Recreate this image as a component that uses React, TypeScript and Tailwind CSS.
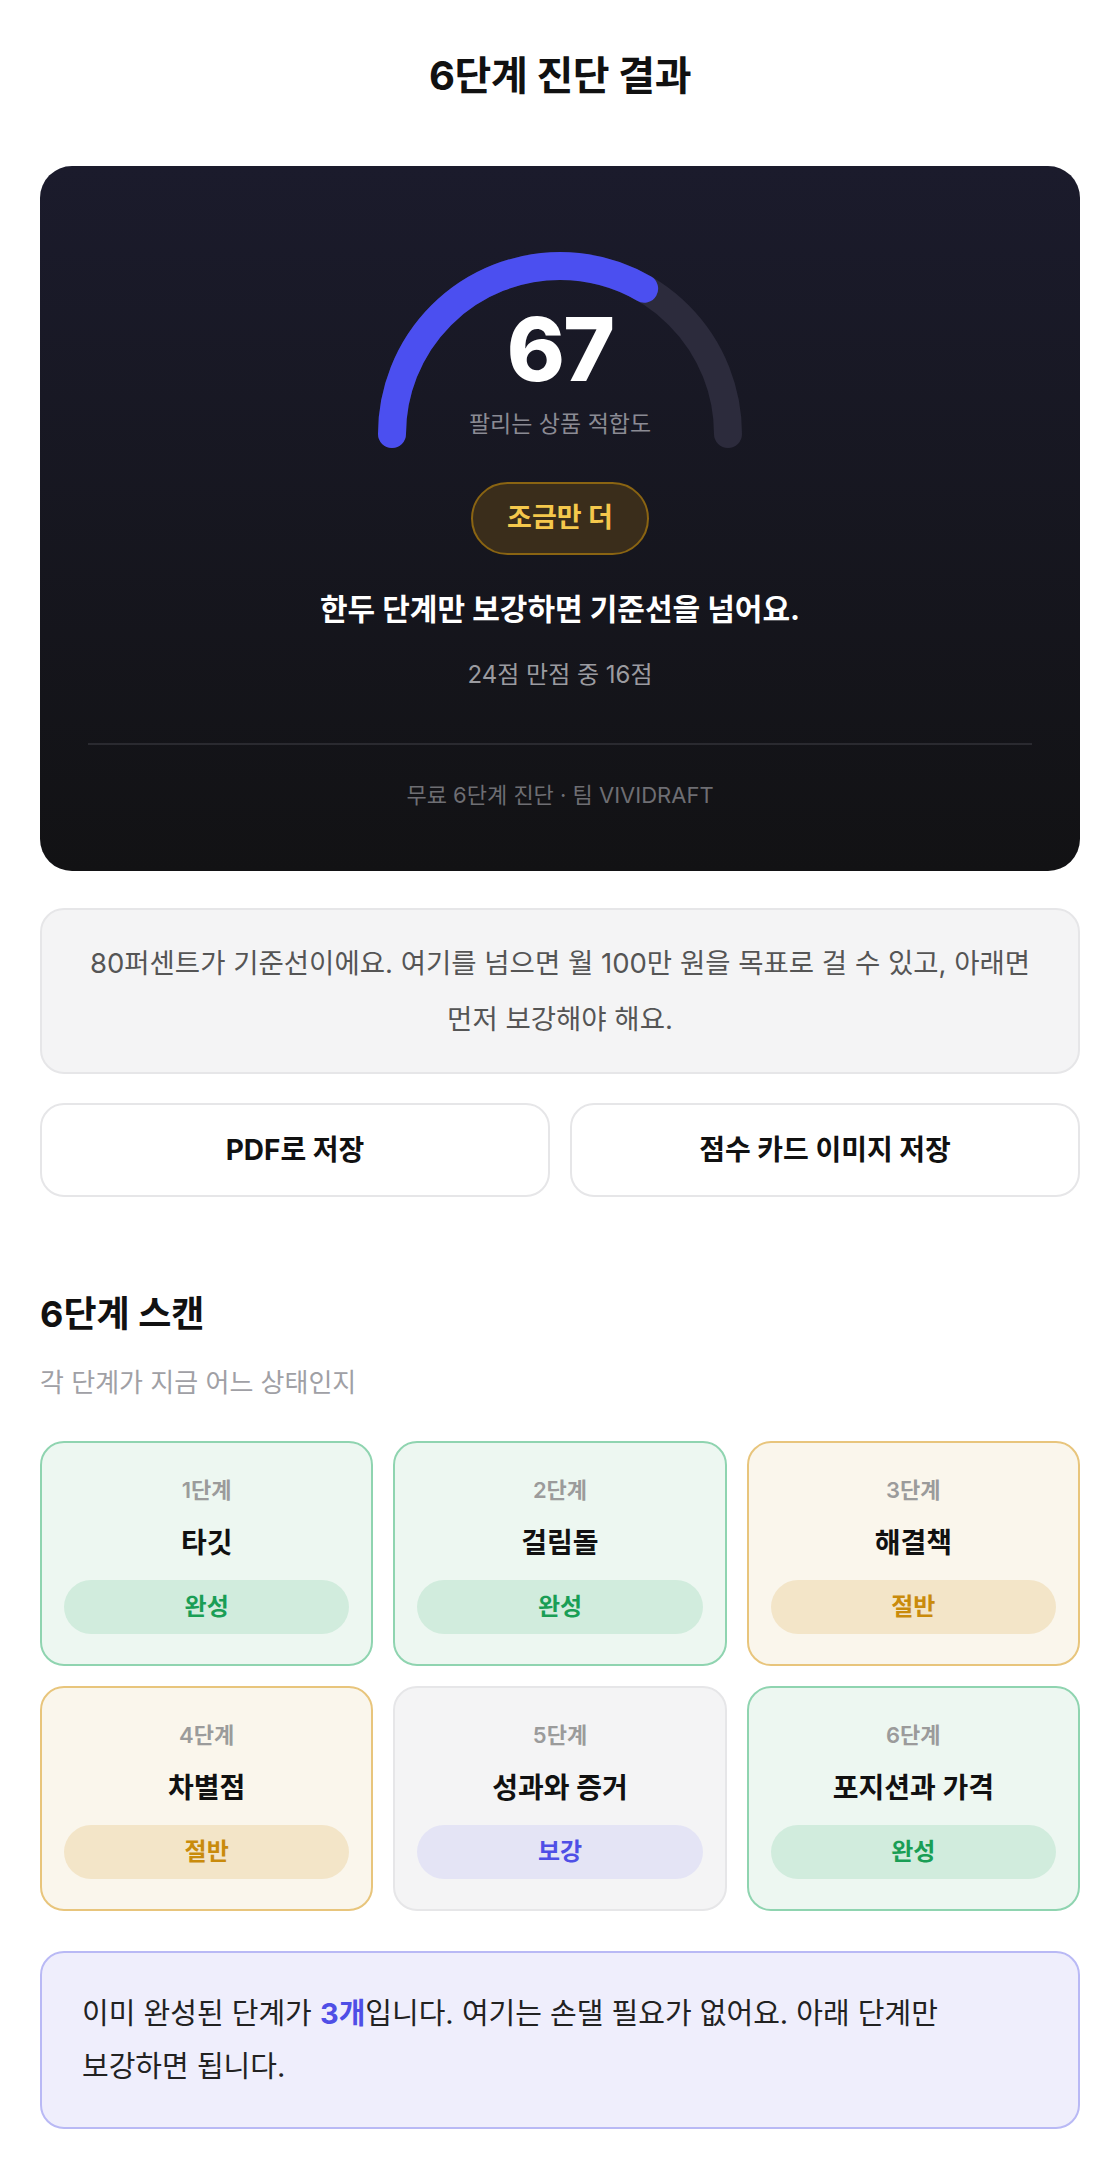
import React from 'react'

type Status = 'done' | 'half' | 'weak'

const steps: { no: number; name: string; status: Status }[] = [
  { no: 1, name: '타깃', status: 'done' },
  { no: 2, name: '걸림돌', status: 'done' },
  { no: 3, name: '해결책', status: 'half' },
  { no: 4, name: '차별점', status: 'half' },
  { no: 5, name: '성과와 증거', status: 'weak' },
  { no: 6, name: '포지션과 가격', status: 'done' },
]

const statusStyle: Record<Status, { card: string; pill: string; label: string }> = {
  done: {
    card: 'bg-[#edf7f1] border-[#8fd4b0]',
    pill: 'bg-[#d1ecdd] text-[#1a9e55]',
    label: '완성',
  },
  half: {
    card: 'bg-[#faf6ec] border-[#e8c57c]',
    pill: 'bg-[#f3e5c8] text-[#c98b0c]',
    label: '절반',
  },
  weak: {
    card: 'bg-[#f4f4f5] border-[#e6e6e8]',
    pill: 'bg-[#e4e4f5] text-[#4f4fe6]',
    label: '보강',
  },
}

// semicircle gauge, r=168 stroke=28
function Gauge({ score, max }: { score: number; max: number }) {
  const r = 168
  const cx = 182
  const cy = 182
  const len = Math.PI * r
  const pct = score / max
  const d = `M ${cx - r} ${cy} A ${r} ${r} 0 0 1 ${cx + r} ${cy}`
  return (
    <div className="relative w-[364px] h-[196px]">
      <svg width="364" height="196" viewBox="0 0 364 196" className="block">
        <path d={d} fill="none" stroke="#2c2b3c" strokeWidth="28" strokeLinecap="round" />
        <path
          d={d}
          fill="none"
          stroke="#4b4ff0"
          strokeWidth="28"
          strokeLinecap="round"
          strokeDasharray={`${len * pct} ${len}`}
        />
      </svg>
      <div className="absolute left-0 right-0 top-[53px] text-center text-[88px] leading-none font-extrabold tracking-[-0.02em] text-white">
        67
      </div>
      <div className="absolute left-0 right-0 top-[156px] text-center text-[23px] leading-[32px] text-[#8b8b94]">
        팔리는 상품 적합도
      </div>
    </div>
  )
}

export default function App() {
  return (
    <div className="min-h-screen bg-white font-[Inter,'Noto_Sans_CJK_KR',sans-serif] text-[#111] break-keep">
      <div className="px-10 pt-[52px] pb-[42px]">
        <h1 className="text-center text-[40px] leading-[48px] font-bold tracking-[-0.01em]">6단계 진단 결과</h1>

        {/* score card */}
        <div className="mt-[66px] rounded-[32px] bg-linear-to-b from-[#1b1b2c] to-[#121214] px-12 pt-[86px] pb-[62px] flex flex-col items-center">
          <Gauge score={16} max={24} />
          <div className="mt-[34px] h-[73px] px-[34px] rounded-full border-2 border-[#8a6412] bg-[#3a2d1b] flex items-center text-[27px] font-bold text-[#f5c84c]">
            조금만 더
          </div>
          <p className="mt-[34px] text-[30px] leading-[40px] font-bold text-white">한두 단계만 보강하면 기준선을 넘어요.</p>
          <p className="mt-[30px] text-[24px] leading-[32px] text-[#9b9ba0]">24점 만점 중 16점</p>
          <div className="mt-[52px] w-full h-[2px] bg-[#2a2a30]" />
          <p className="mt-[36px] text-[22px] leading-[28px] text-[#6e6e73]">무료 6단계 진단 · 팀 VIVIDRAFT</p>
        </div>

        {/* info */}
        <div className="mt-[37px] rounded-[24px] border-2 border-[#e6e6e8] bg-[#f4f4f5] px-10 py-[25px] text-center text-[27.5px] leading-[56px] text-[#555]">
          80퍼센트가 기준선이에요. 여기를 넘으면 월 100만 원을 목표로 걸 수 있고, 아래면 먼저 보강해야 해요.
        </div>

        <div className="mt-[29px] grid grid-cols-2 gap-5">
          <button className="h-[94px] rounded-[24px] border-2 border-[#e6e6e8] bg-white text-[28px] font-bold text-[#111]">
            PDF로 저장
          </button>
          <button className="h-[94px] rounded-[24px] border-2 border-[#e6e6e8] bg-white text-[28px] font-bold text-[#111]">
            점수 카드 이미지 저장
          </button>
        </div>

        {/* scan */}
        <h2 className="mt-[94px] text-[36px] leading-[46px] font-bold">6단계 스캔</h2>
        <p className="mt-[28px] text-[26px] leading-[36px] text-[#a0a0a5]">각 단계가 지금 어느 상태인지</p>

        <div className="mt-[40px] grid grid-cols-3 gap-5">
          {steps.map((s) => {
            const st = statusStyle[s.status]
            return (
              <div
                key={s.no}
                className={`rounded-[24px] border-2 ${st.card} px-[22px] pt-[32px] pb-[30px] flex flex-col items-center`}
              >
                <div className="text-[22px] leading-[30px] font-semibold text-[#9b9b9b]">{`${s.no}단계`}</div>
                <div className="mt-[20px] text-[28px] leading-[36px] font-bold text-[#111]">{s.name}</div>
                <div className={`mt-[19px] w-full h-[54px] rounded-full flex items-center justify-center text-[24px] font-bold ${st.pill}`}>
                  {st.label}
                </div>
              </div>
            )
          })}
        </div>

        {/* note */}
        <div className="mt-[40px] rounded-[24px] border-2 border-[#b9b9f5] bg-[#efeefc] px-10 py-[34px] text-[29px] leading-[53px] text-[#222]">
          이미 완성된 단계가 <span className="font-bold text-[#4f4fe6]">3개</span>입니다. 여기는 손댈 필요가 없어요. 아래 단계만 보강하면 됩니다.
        </div>
      </div>
    </div>
  )
}
